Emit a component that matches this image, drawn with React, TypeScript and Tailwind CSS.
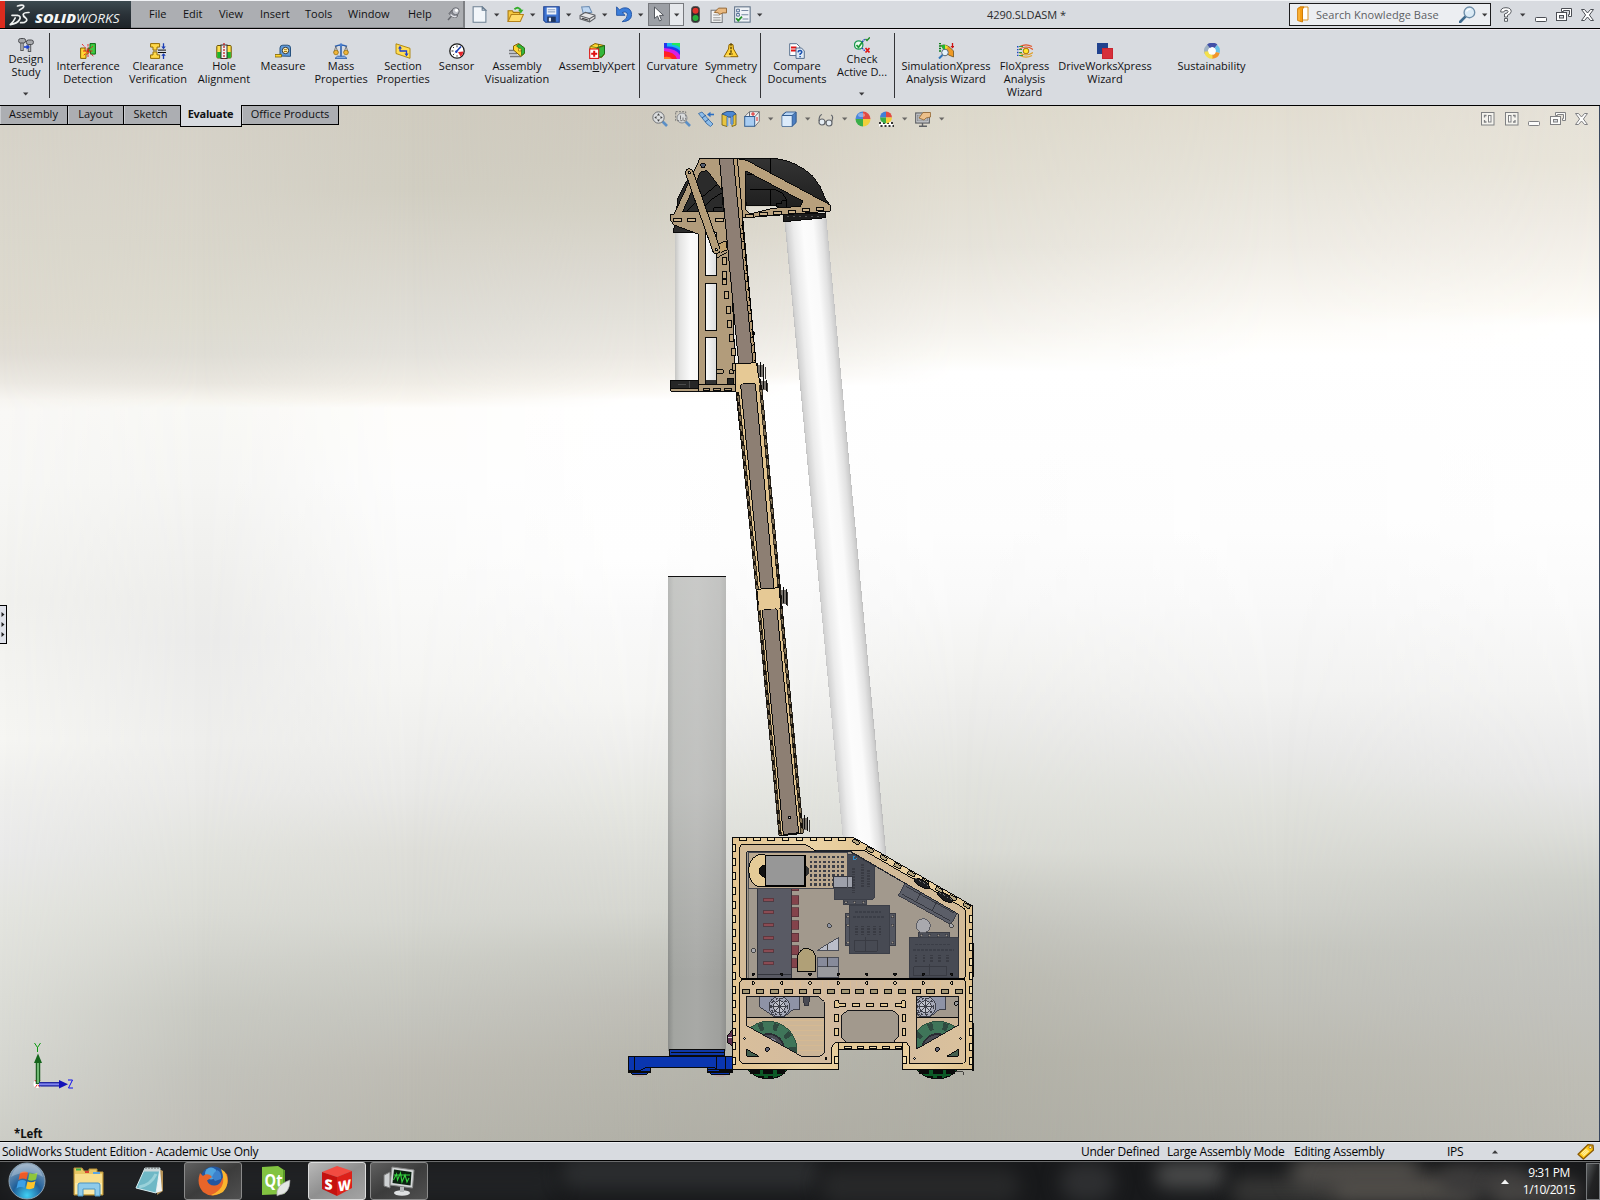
import React from "react";

type Kids = { children?: React.ReactNode };

/* ---------- small shared pieces ---------- */

function Ico({ children, s = 16 }: Kids & { s?: number }) {
  return (
    <svg width={s} height={s} viewBox="0 0 16 16" className="block shrink-0">
      {children}
    </svg>
  );
}

function Caret({ up = false }: { up?: boolean }) {
  return (
    <svg width="6" height="4" viewBox="0 0 6 4" className="block shrink-0">
      <path d={up ? "M0 3.5h6L3 .3z" : "M0 .5h5.4L2.7 3.4z"} fill="#3a3a3c" />
    </svg>
  );
}

/* ---------- title bar ---------- */

function Logo() {
  return (
    <div className="flex h-full w-[131px] bg-gradient-to-b from-[#3c4a50] via-[#2a3238] to-[#1e2328]">
      <div className="h-full w-[5px] bg-[#dc2b1e]" />
      <svg width="126" height="28" viewBox="5 0 126 28">
        <g fill="none" stroke="#eef0f0" strokeWidth="1.7" strokeLinecap="round" strokeLinejoin="round">
          <path d="M17.500 5q6-1.800 6.300.2 0 1.500-4.300 3.800" />
          <path d="M12 14.300h5.500q4 .6 2 4.500-2.300 3.800-9.300 4.900 3-2.400 5-6.700" />
          <path d="M29 11.500q-5.200-.2-5.800 2-.2 1.500 2.200 3.200 3.200 2.700-.8 4.600-1.800.4-4 .4" />
        </g>
        <text x="35" y="22.300" fontFamily="Open Sans, sans-serif" fontSize="12.500" fontWeight="800" fontStyle="italic" fill="#f4f5f5" textLength="41" lengthAdjust="spacingAndGlyphs">SOLID</text>
        <text x="76" y="22.300" fontFamily="Open Sans, sans-serif" fontSize="12.500" fontStyle="italic" fill="#f0f1f1" textLength="43.500" lengthAdjust="spacingAndGlyphs">WORKS</text>
      </svg>
    </div>
  );
}

const menus: [string, string][] = [
  ["File", "w-[34px]"], ["Edit", "w-9"], ["View", "w-[41px]"], ["Insert", "w-[45px]"],
  ["Tools", "w-[43px]"], ["Window", "w-[60px]"], ["Help", "w-[39px]"],
];

function Quick({ children, caret = false }: Kids & { caret?: boolean }) {
  return (
    <div className="flex items-center">
      <div className="flex w-6 justify-center">{children}</div>
      {caret && <div className="flex w-3 justify-center"><Caret /></div>}
    </div>
  );
}

function WinButtons({ dim = false }: { dim?: boolean }) {
  const c = dim ? "#75767a" : "#4b4e54";
  return (
    <>
      <svg width="12" height="14" viewBox="0 0 12 14" className="block shrink-0">
        <rect x=".5" y="9.500" width="11" height="4" rx=".8" fill="#fff" stroke={c} />
      </svg>
      <svg width="16" height="14" viewBox="0 0 16 14" className="block shrink-0">
        <path d="M5.500.5h10v8h-3v-2h1v-4h-6v1h-2z" fill="#fff" stroke={c} />
        <rect x=".5" y="4.500" width="10" height="8" fill="#fff" stroke={c} />
        <rect x="3.500" y="7.500" width="4" height="2.500" fill="#d8dbe0" stroke={c} />
      </svg>
      <svg width="13" height="12" viewBox="0 0 13 12" className="block shrink-0">
        <path d="M.5 .5h3L6.500 4 9.500.5h3L8.400 6l4.100 5.500h-3L6.500 8l-3 3.500h-3L4.600 6z" fill="#fff" stroke={c} />
      </svg>
    </>
  );
}

function TitleBar() {
  return (
    <div className="flex h-[29px] border-t border-b border-t-[#f1f3f6] border-b-black bg-[#d8dbe0]">
      <Logo />
      <div className="flex h-full w-[334px] items-center border-r-2 border-b border-r-[#7e8084] border-b-[#8e9094] bg-[#acaeb2] pl-[18px] text-[11px] text-[#111113]">
        {menus.map(([m, w]) => <div key={m} className={w}>{m}</div>)}
        <svg width="13" height="14" viewBox="0 0 13 14" className="block shrink-0">
          <path d="M1 13l4-4.500" stroke="#66686e" strokeWidth="1.500" />
          <path d="M2 6.500Q6 12 10 10l1-4L6 2z" fill="#85878f" stroke="#54565c" strokeWidth=".8" />
          <path d="M3.500 7.500q3 3 6 1.800" stroke="#e3e4ea" fill="none" strokeWidth="1.500" />
          <circle cx="8.700" cy="4.200" r="3.500" fill="#c3c5cc" stroke="#64666d" strokeWidth=".9" />
          <circle cx="9.500" cy="3.300" r="1.600" fill="#fff" />
        </svg>
      </div>
      <div className="flex h-full items-center pl-[2px]">
        <Quick caret><Ico s={17}>
          <path d="M2 .7h8.500L14 4v11.300H2z" fill="#f2f6fa" stroke="#6d8093" /><path d="M10.500.7V4H14z" fill="#c5d2df" stroke="#6d8093" />
        </Ico></Quick>
        <Quick caret><Ico s={17}>
          <path d="M1 14V4.500h4l1 1.500h6v3z" fill="#f5c842" stroke="#a8780f" /><path d="M1 14.500L4 8h11.500l-3 6.500z" fill="#ffdc6c" stroke="#b5821a" />
          <path d="M7 3q4-3 6 1" stroke="#35ae2c" strokeWidth="1.800" fill="none" /><path d="M10.500 3.500h5L13 7z" fill="#35ae2c" />
        </Ico></Quick>
        <Quick caret><Ico s={17}>
          <path d="M.7.7h14.600v14.600H2.500L.7 13.500z" fill="#3f74d2" stroke="#1b3f8f" /><rect x="3.500" y="1.500" width="9" height="6.500" fill="#eef3fb" /><path d="M4.500 3.500h7M4.500 5.500h7" stroke="#8fa3c4" /><rect x="4" y="10" width="8" height="5" fill="#20355f" /><rect x="5.500" y="11" width="2" height="3.500" fill="#e6ecf6" />
        </Ico></Quick>
        <Quick caret><Ico s={17}>
          <path d="M4 7L2.500 1l7-.5L12 6z" fill="#bed7f2" stroke="#6f8fb4" /><path d="M1 9l5-3 9 2.500v3L10 15l-9-3z" fill="#e5e5e6" stroke="#5b5d62" /><path d="M1.500 9.500l8.500 2.500 5-3M10 12v3" fill="none" stroke="#5b5d62" /><path d="M3 11.500l6 2" stroke="#333" />
        </Ico></Quick>
        <Quick caret><Ico s={17}>
          <path d="M1.500.8v8h8L6.800 6.200q4.500-1.700 4.900 1.800.2 4-5 6.800 8.700-.3 9-6.800Q15 .8 8 1.800 6 2.200 4.300 3.700z" fill="#3b7edb" stroke="#1d4f9f" strokeWidth=".8" />
        </Ico></Quick>
        <div className="ml-px flex h-[23px] border border-[#77797e]">
          <div className="flex w-[21px] items-center justify-center border-r border-[#77797e] bg-[#9c9fa5]">
            <svg width="12" height="17" viewBox="0 0 12 17"><path d="M1.500 1v11.500L4.500 10l2 5 2-.9-2-4.700h4z" fill="#fff" stroke="#555960" /></svg>
          </div>
          <div className="flex w-[13px] items-center justify-center bg-[#e6e8ec]"><Caret /></div>
        </div>
        <div className="flex w-[22px] justify-center">
          <svg width="9" height="17" viewBox="0 0 9 17"><rect x=".5" y=".5" width="8" height="16" rx="3" fill="#2c2c2c" stroke="#555" /><circle cx="4.500" cy="4.700" r="3" fill="#e0342c" /><circle cx="4.500" cy="12" r="3" fill="#27ae3c" /></svg>
        </div>
        <Quick><Ico s={17}>
          <rect x="1" y="4" width="10.500" height="11.500" fill="#f5f5f5" stroke="#77797e" /><path d="M3 8.500h6M3 11h7M3 13.300h7" stroke="#999" />
          <path d="M4 6l4-4h7.500v4.500H12L9 8l-1-1.500z" fill="#e9b980" stroke="#8a5a22" strokeWidth=".8" />
        </Ico></Quick>
        <Quick caret><Ico s={17}>
          <rect x=".6" y=".8" width="14.600" height="14.400" fill="#eff2f6" stroke="#5f7187" /><path d="M2.500 3h2.500v2.500H2.500zM2.500 7h2.500v2.500H2.500z" fill="#fff" stroke="#33507e" strokeWidth=".8" /><path d="M7 4.200h6.500M7 8.200h6.500M8 12.200h5.500" stroke="#7688a0" /><path d="M2 11.500l2 2.300L7.500 10" stroke="#25922b" fill="none" strokeWidth="1.700" />
        </Ico></Quick>
      </div>
      <div className="ml-auto flex h-full items-center">
        <div className="mr-[223px] pt-px text-[11px] tracking-[-0.05px] whitespace-pre text-[#2b2b2d]">4290.SLDASM *</div>
        <div className="flex h-[23px] w-[202px] items-center border border-[#1c1c1e] bg-[#eceef2] pl-[7px]">
          <svg width="12" height="17" viewBox="0 0 12 17"><path d="M3 1h8v13H5z" fill="#fff" stroke="#d9952a" /><path d="M.7 2.500L3 1h4L5.500 3v13L.7 14.500z" fill="#f79d12" stroke="#d07d08" /><path d="M2 3.500v11" stroke="#ffc65c" /></svg>
          <div className="ml-[7px] w-[143px] pt-px text-[11px] tracking-[0.05px] text-[#5d5f64]">Search Knowledge Base</div>
          <Ico s={17}><path d="M1 15l5-5" stroke="#3f6a8d" strokeWidth="2.600" strokeLinecap="round" /><circle cx="9.800" cy="6" r="5" fill="#dcebf6" stroke="#6e8ea9" strokeWidth="1.300" /><path d="M7 5q1.500-2.500 4-2" stroke="#fff" fill="none" strokeWidth="1.300" /></Ico>
          <div className="ml-[6px]"><Caret /></div>
        </div>
        <svg width="12" height="15" viewBox="0 0 12 15" className="ml-[9px]"><path d="M.7 5Q.5.700 6 .7q5.200.2 5.200 3.800Q11 7 7.500 8.300V10h-3V7q3.700-1 3.600-2.500Q8 3.300 6 3.300 4 3.500 3.700 5zM4.500 11.500h3v2.800h-3z" fill="#fff" stroke="#4b4e54" strokeWidth=".9" /></svg>
        <div className="mr-[9px] ml-2"><Caret /></div>
        <div className="mr-[6px] flex items-center gap-[9px]"><WinButtons /></div>
      </div>
    </div>
  );
}

/* ---------- ribbon ---------- */

const G: Record<string, React.ReactNode> = {
  design: <><path d="M4 4v10M11.500 5v10" stroke="#55575b" strokeWidth="3.400" /><path d="M4 5v8M11.500 6v8" stroke="#b9bbc0" strokeWidth="1.500" /><rect x=".6" y="1.500" width="7" height="4.500" rx="2" fill="#a8aaae" stroke="#494b4f" /><rect x="8.400" y="3" width="7" height="4.500" rx="2" fill="#a8aaae" stroke="#494b4f" /><path d="M6 10h4" stroke="#1b3fd0" strokeWidth="1.600" /><path d="M8.500 7.500L12 10l-3.500 2.500z" fill="#1b3fd0" /></>,
  interference: <><path d="M.6 5h4.500v3h3v3H6v4.400H.6z" fill="#ffd633" stroke="#8a6400" /><path d="M15.400.6H10v4.500H8v3h2.500v3H15.400z" fill="#3ecc42" stroke="#0c6b12" /><path d="M2 1l12 13M13 3L3 13M8 1v14M3 8h10" stroke="#ee1c1c" strokeWidth=".9" strokeDasharray="2.500 1" /></>,
  clearance: <><path d="M.6.6h9v3.500H7v3H3v-3H.6zM.6 15.400h9v-3.500H7v-3H3v3H.6z" fill="#ffd94a" stroke="#946c00" /><path d="M8 7.100h8M8 9.500h8" stroke="#111" /><path d="M13.500.3v5M13.500 16v-5" stroke="#1c3fb5" strokeWidth="1.300" /><path d="M11.300 3.500h4.500L13.500 6.300zM11.300 12.800h4.500l-2.300-2.500z" fill="#1c3fb5" /></>,
  hole: <><rect x=".8" y="2.500" width="14.400" height="12.500" rx="1" fill="#ffdf4d" stroke="#6b5200" /><rect x="1.200" y="9" width="13.600" height="6" fill="#1eb52c" /><rect x="5" y="2" width="6" height="13.500" fill="#efefef" stroke="#333" /><path d="M8 0v16" stroke="#c01010" strokeDasharray="2 1" strokeWidth="1.200" /></>,
  measure: <><path d="M5 13V5q0-2.800 2.800-2.800h5Q15.500 2.200 15.500 5v8.300z" fill="#5f9bdc" stroke="#27527f" /><circle cx="10.500" cy="7.500" r="3.200" fill="#fff4c2" stroke="#333" /><path d="M9 6.700h3M9 8.500h3" stroke="#b07d00" /><path d="M0 11.500h6.500v2.500H0z" fill="#ffd633" stroke="#7d6100" strokeWidth=".8" /></>,
  mass: <><path d="M8 1v13M2 3.500q6-3 12 0" stroke="#2b5fae" strokeWidth="1.600" fill="none" /><path d="M2.800 3.500L.8 9.500M2.800 3.500l2.400 6M13.200 3.500l-2.400 6M13.200 3.500l2 6" stroke="#666" strokeWidth=".8" /><circle cx="3" cy="9.500" r="2.300" fill="#f0b53c" stroke="#946c00" strokeWidth=".7" /><circle cx="13" cy="9.500" r="2.300" fill="#f0b53c" stroke="#946c00" strokeWidth=".7" /><path d="M2 15.400l2.500-2.200h7l2.500 2.200z" fill="#8fb5e6" stroke="#2b5fae" strokeWidth=".9" /><circle cx="8" cy="1.800" r="1.500" fill="#4a7fd0" /></>,
  section: <><path d="M1 .8l14 4.500v10L1 10.500z" fill="#ffdd55" stroke="#ad8100" strokeWidth=".9" /><path d="M5 8.500v-4M5 8h6.500v3.500" stroke="#1c3fd0" strokeWidth="1.300" fill="none" /><path d="M3 5.500h4L5 2.800zM9.500 10.500h4l-2 3z" fill="#1c3fd0" /></>,
  sensor: <><circle cx="8" cy="8" r="7.200" fill="#fff" stroke="#1b1b1b" strokeWidth="1.300" /><path d="M9 9l5.500-.5Q14 12 11.500 13.500z" fill="#e4242a" /><path d="M7 9l5-5.500" stroke="#1c3fb5" strokeWidth="1.600" /><circle cx="7.300" cy="8.700" r="1.200" fill="#1c3fb5" /><path d="M2.500 8h2M8 2.300v2M4 4l1 1M4 12l1.200-1M8 13.700v-1.500" stroke="#333" /></>,
  visual: <><path d="M0 7.500h6M0 10.500h8M1 13.500h11" stroke="#77797d" strokeWidth="1.600" /><path d="M4.500 3L9.500.5 15.500 5v5.500L12 13.500 4.500 7z" fill="#ffd633" stroke="#846200" /><path d="M10 1l5.500 4v5l-3 2.500V7L7.500 3z" fill="#34b63b" stroke="#176b1c" strokeWidth=".7" /><path d="M9.500 5.500h2.500v2.500H9.500z" fill="#fff06a" stroke="#846200" strokeWidth=".6" /></>,
  xpert: <><path d="M1 3.500L6 .6l9.500 2v8.500l-3 3.500L1 11z" fill="#ffd633" stroke="#846200" /><path d="M8 4.500l7.500-2v8l-3 3.500H8z" fill="#34b63b" stroke="#176b1c" /><path d="M2 3.500l7 1.500L14.500 3M9.500 1v5" stroke="#4d6b10" fill="none" strokeWidth=".7" /><rect x=".7" y="6" width="9" height="9.400" fill="#fff" stroke="#d11" strokeWidth="1.100" /><path d="M5.200 7.800v6M2.200 10.800h6" stroke="#e01010" strokeWidth="2" /></>,
  curvature: <><rect width="16" height="16" fill="#ff1f24" /><path d="M0 0h16v16h-3Q11 9 0 8z" fill="#d81fe0" /><path d="M0 0h16v12q-3-6-16-7z" fill="#2335ee" /><path d="M3 0h13v8Q12 3 3 3.500z" fill="#14b8f0" /><path d="M8 0h8v4.500Q13 1.800 8 1.800z" fill="#24e85c" /><path d="M0 14q6-1 8 2H0z" fill="#ff8020" /></>,
  symmetry: <><path d="M8 1.200l-2 .5L5.500 6 1 13.700h14L10.500 6 10 1.700z" fill="#ffd23a" stroke="#8e6300" strokeLinejoin="round" /><path d="M8 .3v11M6 11h4" stroke="#4d3a00" strokeDasharray="2.500 1" strokeWidth="1.300" /><path d="M2.500 13h5" stroke="#fff3b0" /></>,
  compare: <><path d="M.7.7h7l3 3v8.800h-10z" fill="#fff" stroke="#58708e" /><path d="M2 4.500h5.500M2 7.500h5.500" stroke="#e01616" strokeWidth="2" /><path d="M7 5h5.500L15.300 8v7.400H7z" fill="#dfeaf7" stroke="#58708e" /><path d="M9 9.300Q9.200 7.500 11 7.500q2 .2 1.800 1.800Q12.400 10.500 11.100 11v1M11.100 13v1.300" stroke="#1b52ae" strokeWidth="1.500" fill="none" /></>,
  check: <><circle cx="4.700" cy="8" r="4.200" fill="#eefaf0" stroke="#1b9a53" strokeWidth="1.300" /><path d="M2.500 8l2 2.300L9 4" stroke="#1b9a36" strokeWidth="1.700" fill="none" /><path d="M8 5l3-3M8 11l3 3" stroke="#223cc9" strokeWidth="1.300" strokeDasharray="1.500 .8" /><path d="M11.500 2l1.500 1.500L15.800.4" stroke="#1b8a26" strokeWidth="1.400" fill="none" /><path d="M11.500 11l4 4.500M15.500 11l-4 4.500" stroke="#e01616" strokeWidth="1.700" /></>,
  simx: <><path d="M1 .5h2M1 3h2M1 5.500h2M1 8h2" stroke="#0d7d1a" strokeWidth="1.600" /><path d="M3 2.500Q9 0 15.500 8V14L10.500 12z" fill="#f09a24" stroke="#4a3200" strokeWidth=".6" /><path d="M3 2.500Q6 .8 8.500 2.500L6 8z" fill="#23b634" /><path d="M7 2l3 1.500-3 5z" fill="#e6e034" /><circle cx="7" cy="9.500" r="3.300" fill="#e4f2fb" stroke="#5a6a76" /><path d="M4.500 12L1 15.500" stroke="#2f73b7" strokeWidth="2" /><path d="M14.500 0v4" stroke="#c11" strokeWidth="1.300" /><path d="M12.500 3h4l-2 2.500z" fill="#c11" /></>,
  flox: <><path d="M3 3.500Q9 .2 15 3.500M2 6.500Q9 1.500 16 6.500" fill="none" stroke="#e0562c" strokeWidth="1.200" /><path d="M3 12.500q6 3.300 12 0M2 9.500q7 5 14 0" fill="none" stroke="#e0a02c" strokeWidth="1.200" /><path d="M2 3.500h4M2 6.500h3M2 9.500h3M2 12.500h4" stroke="#2da044" strokeWidth="1.200" /><path d="M.7 3v11" stroke="#2148c4" strokeWidth="1.600" strokeDasharray="1.400 1.500" /><circle cx="9" cy="8" r="2.800" fill="#ffe62e" stroke="#a8700c" /></>,
  drive: <><rect width="11" height="11" fill="#21428e" /><rect x="3" y="5" width="11" height="11" transform="translate(2 0)" fill="#c9252f" /><rect x="4" y="6" width="9" height="9" transform="translate(2 0)" fill="#d62f3a" /></>,
  sustain: <><circle cx="8" cy="8" r="4" fill="#fdfefe" /><path d="M2.200 10A6 6 0 016 2.400" stroke="#9fb2c4" strokeWidth="4" fill="none" /><path d="M4.500 3.200a6 6 0 017.500 0" stroke="#4150a8" strokeWidth="4.400" fill="none" /><path d="M12 3.500A6 6 0 0113.700 9.500" stroke="#69c2e8" strokeWidth="4" fill="none" /><path d="M13.800 9.500a6 6 0 01-5.800 4.300" stroke="#f0962c" strokeWidth="4" fill="none" /><path d="M8.500 13.800A6 6 0 012.200 8.500" stroke="#f4e04c" strokeWidth="4" fill="none" /></>,
};

type Cmd = { k: string; t: React.ReactNode[]; w: string; high?: boolean };
const SEP = "sep";
const ribbon: (Cmd | string)[] = [
  { k: "design", t: ["Design", "Study"], w: "w-[46px] ml-[3px]", high: true }, SEP,
  { k: "interference", t: ["Interference", "Detection"], w: "w-[72px] ml-[2px]" },
  { k: "clearance", t: ["Clearance", "Verification"], w: "w-[68px]" },
  { k: "hole", t: ["Hole", "Alignment"], w: "w-16" },
  { k: "measure", t: ["Measure"], w: "w-[54px]" },
  { k: "mass", t: ["Mass", "Properties"], w: "w-[62px]" },
  { k: "section", t: ["Section", "Properties"], w: "w-[62px]" },
  { k: "sensor", t: ["Sensor"], w: "w-[45px]" },
  { k: "visual", t: ["Assembly", "Visualization"], w: "w-[76px]" },
  { k: "xpert", t: [<>Assem<span className="underline">b</span>lyXpert</>], w: "w-[84px]" }, SEP,
  { k: "curvature", t: ["Curvature"], w: "w-[60px] ml-[2px]" },
  { k: "symmetry", t: ["Symmetry", "Check"], w: "w-[58px]" }, SEP,
  { k: "compare", t: ["Compare", "Documents"], w: "w-[66px] ml-[3px]" },
  { k: "check", t: ["Check", "Active D..."], w: "w-16", high: true }, SEP,
  { k: "simx", t: ["SimulationXpress", "Analysis Wizard"], w: "w-[98px] ml-[2px]" },
  { k: "flox", t: ["FloXpress", "Analysis", "Wizard"], w: "w-[59px]" },
  { k: "drive", t: ["DriveWorksXpress", "Wizard"], w: "w-[102px]" },
  { k: "sustain", t: ["Sustainability"], w: "w-[99px] ml-[6px]" },
];

function Ribbon() {
  return (
    <div className="flex h-[77px] border-t border-b border-t-[#f0e8f0] border-b-black bg-[#d8dbe0] text-[11px] leading-[13px] text-[#111113]">
      {ribbon.map((r, i) =>
        typeof r === "string" ? (
          <div key={i} className="mt-[3px] h-[65px] w-px bg-[#333437]" />
        ) : (
          <div key={i} className={`flex shrink-0 flex-col items-center text-center ${r.w} ${r.high ? "pt-[7px]" : "pt-[13px]"}`}>
            <Ico>{G[r.k]}</Ico>
            <div className={`whitespace-nowrap ${r.high ? "-mt-px" : ""}`}>
              {r.t.map((l, j) => <div key={j}>{l}</div>)}
            </div>
            {r.high && <div className="mt-[14px]"><Caret /></div>}
          </div>
        )
      )}
    </div>
  );
}

/* ---------- viewport background ---------- */

const cols: { x: number; c: string }[] = [
  { x: 0, c: "106 d6d2c8,247 dbd8cd,318 dedacf,354 e1ddd5,383 ece9e3,400 f7f5f1,411 f9f8f6,480 f7f7f5,600 f1f1ee,740 f6f6f3,791 efefed,850 eaeaea,910 e4e5e0,995 dcddd7,1080 d4d5cf,1141 cccdc6" },
  { x: 200, c: "106 d5d1c7,247 d9d6cb,318 dddbd0,354 dfddd5,383 e9e6df,400 f6f4ee,408 f8f8f5,480 f5f5f3,600 ededeb,640 ebebea,740 eeeeec,790 eaeae8,850 e2e3de,910 dbdcd6,950 d4d5cf,1010 c9cac3,1070 c3c3bc,1141 c0beb7" },
  { x: 410, c: "106 d0ccc0,190 d1cec2,247 d8d5cb,318 dfddd6,354 e4e2dc,383 efece5,400 f9f6f0,408 fefdfb,480 fdfdfd,600 f9f9f8,680 f5f5f3,740 efefed,790 e9e9e7,850 deded9,920 d6d7d1,960 cdcec7,1020 c4c4bd,1070 bebcb4,1141 b7b6ad" },
  { x: 640, c: "106 cfcabe,160 d0ccc0,210 d4d1c5,270 dcd9d1,318 e3e1da,354 ebe8e2,375 f3f0ea,392 fbf9f5,400 ffffff,560 fefefe,620 f9f9f9,700 f5f5f3,750 eeeeec,800 e6e7e2,860 dcddd8,910 d5d6d0,950 c9cac3,1000 c0bfb8,1060 b8b7ae,1141 b1b0a7" },
  { x: 800, c: "106 d5d1c4,170 d9d4c8,228 ddd9ce,280 e5e2da,324 ece9e3,355 f3f1ec,374 f9f7f3,386 ffffff,545 fdfdfd,610 f9f9f9,680 f4f4f2,735 ededeb,790 e4e5e0,855 dbdcd7,900 d1d2cb,940 c5c6bf,990 bdbcb4,1060 b5b4ab,1141 b0aea5" },
  { x: 960, c: "106 dcd8cb,180 e1ddd1,247 e6e3da,290 eeebe4,330 f5f3ee,355 fbfaf6,372 ffffff,530 fdfdfd,600 f9f9f9,660 f3f3f1,720 ebebe9,780 e2e3de,850 dadbd5,890 cccdc6,930 c2c2bb,980 bab9b0,1060 b2b1a7,1141 aeada4" },
  { x: 1280, c: "106 e2ddd1,170 e6e3d9,247 efece5,300 f8f6f1,335 fefdfa,355 ffffff,530 fdfdfd,600 f9f9f9,690 f2f2f1,750 e9e9e8,800 e1e2dd,860 d8d9d3,910 cfd0ca,950 c6c7c0,1000 c1c1ba,1060 bab9b0,1141 b4b3aa" },
  { x: 1600, c: "106 e5e1d8,160 e8e4d9,220 efebe4,270 f6f3ed,310 fdfbf6,325 ffffff,520 fefefe,600 fafafa,690 f3f3f2,780 e8e8e8,830 dddeda,880 ced0ca,930 c6c7c2,1000 c2c2bd,1080 bebdb5,1141 bbbab2" },
];

function Backdrop() {
  return (
    <div className="absolute inset-0">
      {cols.map((col, i) => {
        const stops = col.c.split(",").map((s) => {
          const [y, h] = s.split(" ");
          return `#${h} ${+y - 106}px`;
        });
        const mask = i ? `linear-gradient(to right, transparent ${cols[i - 1].x}px, black ${col.x}px)` : undefined;
        return <div key={i} className="absolute inset-0" style={{ background: `linear-gradient(to bottom, ${stops.join(",")})`, maskImage: mask }} />;
      })}
    </div>
  );
}

/* ---------- CAD model ---------- */

const K = "#0a0a0a";
const rng = (n: number) => Array.from({ length: n }, (_, i) => i);

function Bolt({ x, y, h }: { x: number; y: number; h: number }) {
  return (
    <g>
      <rect x={x} y={y} width="20" height={h} fill="#77726c" stroke="none" />
      <path d={`M${x + 2} ${y - 4}v${h + 4}M${x + 11} ${y - 8}v${h + 6}M${x + 20} ${y - 2}v${h + 6}`} stroke={K} strokeWidth="3" />
      <path d={`M${x + 24} ${y + 6}v${h}`} stroke="#3d3a37" strokeWidth="3" />
    </g>
  );
}

function Head() {
  return (
    <g transform="translate(650 145) scale(.33333)" stroke={K} strokeWidth="3">
      <rect x="76" y="262" width="130" height="448" fill="url(#tubeL)" stroke="none" />
      <path d="M70 262L76 225 84 160Q100 120 125 85L150 70H215L222 262Z" fill="#2b2b2b" />
      <path d="M108 200Q150 160 215 108M150 200Q180 160 215 145M192 200V188H215" fill="none" stroke="#000" />
      <path d="M265 40H375Q440 48 490 95Q515 125 525 160L541 182 440 205 380 183H290Z" fill="url(#dark)" />
      <path d="M361 40V90M290 90Q400 80 460 150M300 133H372Q400 140 410 165M361 133V182M380 185V175H395V168H410V185" fill="none" stroke="#000" />
      <path d="M296 185H376V192L330 204H296Z" fill="#e2dfd6" stroke="none" />
      <path d="M400 208L527 204V218L402 230Z" fill="#1c1c1c" />
      <path d="M410 214H520" stroke="#555" strokeDasharray="8 10" />
      {/* rear plates */}
      <path d="M150 40H215V135L172 77 152 80 98 200H228L240 262 258 740H146V268L72 240 62 225V208H72Z" fill="#b29c7b" />
      {[[166, 262, 130], [166, 415, 141], [166, 577, 141]].map(([x, y, h]) => (
        <rect key={y} x={x} y={y} width="34" height={h} fill="url(#tubeW)" />
      ))}
      <rect x="167" y="705" width="32" height="13" fill="#333" stroke="none" />
      <path d="M62 706H146V730H62Z" fill="#262626" />
      <path d="M62 730H146V739H62Z" fill="#b29c7b" />
      <path d="M84 720h24M118 708v22" stroke="#4a4a4a" />
      <path d="M148 720H256M200 674h20v11h-20M240 674h10v12h-10z" fill="none" />
      <path d="M232 700h18v18h-18z" fill="#222" />
      {rng(3).map((i) => <rect key={i} x={160 + i * 32} y="730" width="20" height="8" fill="none" />)}
      {[[70, 220], [114, 220], [198, 220]].map(([x, y]) => <rect key={x} x={x} y={y} width="24" height="10" fill="#c9b08a" />)}
      {[338, 380, 405, 440, 484, 526, 570, 612, 655].map((y, i) => (
        <rect key={y} x={219 + (i > 2 ? (i - 2) * 5 : 0)} y={y} width="12" height={y === 405 ? 14 : 21} fill="#c2a981" />
      ))}
      <circle cx="159" cy="61" r="7" fill="#555f70" />
      {/* right truss */}
      <path d="M255 40L290 46 541 180V198L290 218 268 220Z M288 78V195L300 207 368 190 452 184 458 168Z" fill="#b8a07c" fillRule="evenodd" />
      {[[288, 208], [330, 204], [372, 199], [415, 196], [458, 192], [500, 188]].map(([x, y]) => (
        <rect key={x} x={x} y={y} width="22" height="9" fill="#c9b08a" />
      ))}
      {[55, 97, 142, 184].map((y, i) => <rect key={y} x={253 + i * 4} y={y} width="10" height="22" fill="#c9b08a" />)}
      {/* upper arm */}
      <path d="M250 40H262L318 655H308Z" fill="#b89d76" />
      <path d="M276 225L318 650" stroke="#000" strokeWidth="3" />
      <path d="M276 240L315 650" stroke="#000" strokeWidth="8" strokeDasharray="3 21" />
      <path d="M208 40H250L309 655H266Z" fill="#8e7f74" />
      <path d="M118 83L199 314" stroke={K} strokeWidth="26" strokeLinecap="round" />
      <path d="M118 83L199 314" stroke="#b69e79" strokeWidth="20" strokeLinecap="round" />
      <circle cx="118" cy="83" r="4" fill="#ddd" /><circle cx="199" cy="314" r="4" fill="#ddd" />
      <path d="M208 296L228 288 232 315 212 322M202 338L232 322" fill="#c0a16c" />
      <path d="M306 560l10 4-6 8z" fill="#000" />
    </g>
  );
}

function Arm() {
  return (
    <g transform="translate(700 360) scale(.33333)" stroke={K} strokeWidth="3">
      <Bolt x={172} y={14} h={38} /><Bolt x={180} y={62} h={28} />
      <Bolt x={240} y={690} h={42} /><Bolt x={304} y={1374} h={36} />
      <path d="M107 12L168 8 180 70 241 685 309 1420 238 1428 170 690 108 95Z" fill="#e2c48f" />
      <path d="M112 95L171 688 240 1426" fill="none" stroke="#8b7a5d" strokeWidth="7" />
      <path d="M182 75L238 684 307 1418" fill="none" stroke="#8b7a5d" strokeWidth="7" />
      <path d="M112 95L171 688 240 1426" fill="none" stroke="#15110c" strokeWidth="7" strokeDasharray="14 16" />
      <path d="M182 75L238 684 307 1418" fill="none" stroke="#15110c" strokeWidth="7" strokeDasharray="14 16" />
      <path d="M109 95L168 688 237 1426M116 95L175 688 244 1426M178 75L234 684 303 1418M185 75L241 684 310 1418" fill="none" stroke="#15110c" strokeWidth="2.500" />
      <path d="M122 76L128 71 160 69 166 72 222 685 182 685Z" fill="#8d7f73" />
      <path d="M187 754L191 749 225 746 231 750 296 1418 250 1424Z" fill="#8d7f73" />
      <path d="M108 12L168 8 176 66 114 72Z" fill="#e6c995" stroke="none" />
      <path d="M172 688L237 683 241 744 178 750Z" fill="#e6c995" stroke="none" />
      <path d="M107 70V12L168 8M170 688L238 683M170 688L174 750M238 683L242 744M240 1427L308 1420" fill="none" />
      <rect x="265" y="1369" width="6" height="6" fill="#ccc" />
    </g>
  );
}

function Screws({ y, fill = "#d9c3a0" }: { y: number; fill?: string }) {
  return <>{[400, 485, 570, 655, 740, 825, 910, 995].map((x) => <circle key={x} cx={x} cy={y} r="4" fill={fill} />)}</>;
}

function Speed({ x, y, w, h }: { x: number; y: number; w: number; h: number }) {
  return (
    <g>
      <rect x={x} y={y} width={w} height={h} fill="#474a53" stroke="#3c3f48" />
      {rng(5).map((i) => <path key={i} d={`M${x + 20 + (i * (w - 30)) / 5} ${y + h * 0.42}v${h * 0.2}`} stroke="#393b43" strokeWidth="8" strokeDasharray="5 3" />)}
      <path d={`M${x + 16} ${y + 20}h${w - 40}M${x + 10} ${y + 36}h${w - 24}`} stroke="#3b3e47" strokeWidth="5" strokeDasharray="9 3" />
      <path d={`M${x + 14} ${y + h * 0.72}h${w - 50}v${h * 0.22}h-${w - 50}zM${x + w * 0.4} ${y + h * 0.66}v${h * 0.3}`} fill="none" stroke="#393b43" />
    </g>
  );
}

function Wheel({ cx, cy }: { cx: number; cy: number }) {
  return (
    <g>
      <circle cx={cx} cy={cy} r="86" fill="#3f7559" stroke="#2c4f3d" />
      <circle cx={cx} cy={cy} r="72" fill="none" stroke="#2f4a40" strokeWidth="22" strokeDasharray="14 30" />
      <circle cx={cx} cy={cy} r="48" fill="#4a4b54" stroke="#2a2b33" strokeWidth="5" />
      <circle cx={cx} cy={cy} r="34" fill="none" stroke="#85889a" strokeWidth="6" strokeDasharray="14 10" />
    </g>
  );
}

function Gearbox({ x, y }: { x: number; y: number }) {
  return (
    <g stroke="#3d3f49">
      <path d={`M${x - 60} ${y - 30}H${x + 60}V${y + 10}H${x + 40}L${x + 10} ${y + 34}H${x - 10}L${x - 60} ${y}Z`} fill="#8e93a6" />
      <circle cx={x} cy={y} r="31" fill="#a6a9b8" />
      <circle cx={x} cy={y} r="18" fill="#c0c2cc" />
      <circle cx={x} cy={y} r="25" fill="none" strokeWidth="4" strokeDasharray="7 8" />
      <path d={`M${x - 26} ${y}H${x + 26}M${x} ${y - 26}V${y + 26}M${x - 19} ${y - 19}L${x + 19} ${y + 19}M${x - 19} ${y + 19}L${x + 19} ${y - 19}`} />
    </g>
  );
}

function Base() {
  return (
    <g transform="translate(620 820) scale(.33333)" stroke={K} strokeWidth="3">
      {/* stand foot */}
      <path d="M40 765q18 14 36 0M280 765q18 14 40 0" fill="#b7a7a4" stroke="none" />
      <path d="M148 688H315V708H148Z" fill="#0e38a8" /><path d="M152 697H311" />
      <path d="M25 710H338V752H330V764H275L262 752V742H92V752L80 764H38L25 752Z" fill="#0a36b0" />
      <path d="M44 710V750M290 710V750M316 710V750M25 752H60L80 742H92M262 742H280L300 752H338M262 750H338" fill="none" />
      <path d="M25 757H92M262 757H338" strokeWidth="7" />
      {/* wheels below the chassis */}
      <path d="M385 750H500Q485 775 445 776Q405 775 385 750Z" fill="#0d5a27" /><path d="M892 750H1010Q995 775 952 776Q912 775 892 750Z" fill="#0d5a27" />
      <path d="M390 757H495M898 757H1005" strokeWidth="12" strokeDasharray="30 10" /><path d="M415 770H475M922 770H982" strokeWidth="6" strokeDasharray="16 12" /><path d="M1005 755H1030V765" fill="none" strokeWidth="2" />
      <path d="M338 628L324 645V668L338 680Z" fill="#5c3050" /><path d="M325 652h12v14" stroke="#ddd" fill="none" />
      {/* chassis */}
      <path d="M338 52H700L1058 258V750H848V670H656V750H338Z" fill="url(#wood)" />
      <path d="M1059 370V470M1059 608V752" strokeWidth="5" />
      <path d="M366 73H556L588 93H735L1028 262Q1036 266 1036 274V470L1030 476H366L360 470V80Z" fill="#d3bb98" />
      <path d="M380 95H690L1016 283V475H380Z" fill="#a2998d" stroke="#20242c" />
      <g clipPath="url(#win)">
        <path d="M385 98V475" stroke="#6b6862" />
        <rect x="412" y="95" width="103" height="380" fill="#595a64" stroke="#33353d" />
        {[240, 278, 315, 354, 393, 430].map((y) => <rect key={y} x="430" y={y - 5} width="31" height="9" fill="#8b4b53" stroke="#4a2d34" strokeWidth="2" />)}
        {[200, 240, 277, 315, 353, 391, 430].map((y) => <rect key={y} x="516" y={y - 13} width="20" height="26" fill="#84434b" stroke="#4c2a31" strokeWidth="2" />)}
        <path d="M683 103H700L765 140V230L755 240H643V200H683Z" fill="#474a53" stroke="#3c3f48" />
        <path d="M727 132V200M745 150V200M700 145V220" stroke="#393b43" strokeWidth="8" strokeDasharray="5 3" />
        <rect x="385" y="99" width="298" height="107" fill="#bba990" stroke="#44464f" />
        {rng(7).map((r) => <path key={r} d={`M570 ${112 + r * 13.600}H674`} stroke="#3d3f47" strokeWidth={r % 2 ? 5 : 7} strokeDasharray="7 6.500" />)}
        <path d="M436 105H415Q386 115 386 152Q388 190 415 200H436Z" fill="#e5cb97" stroke={K} />
        <path d="M436 135Q418 138 418 152Q418 168 436 172Z" fill="#111" stroke={K} />
        <rect x="437" y="107" width="119" height="91" fill="#979797" stroke="#000" strokeWidth="5" />
        <path d="M558 138l10 8v14l-10 8z" fill="#333" stroke="none" />
        <rect x="640" y="170" width="57" height="34" fill="#9da0aa" stroke="#33353d" /><path d="M682 170v34" stroke="#4b4e57" strokeWidth="4" />
        <path d="M705 108a6 6 0 106 6" fill="none" stroke="#2f8fd0" />
        <rect x="670" y="238" width="70" height="16" fill="#4d5059" stroke="#3c3f48" />
        {[678, 704, 730].map((x) => <circle key={x} cx={x} cy="247" r="4" fill="#9a948b" stroke="#33353d" strokeWidth="2" />)}
        <rect x="676" y="281" width="150" height="95" fill="#545761" stroke="#393b43" />
        {[290, 316, 368].map((y) => <g key={y}><circle cx="684" cy={y} r="4" fill="#a2998d" strokeWidth="2" stroke="#33353d" /><circle cx="818" cy={y} r="4" fill="#a2998d" strokeWidth="2" stroke="#33353d" /></g>)}
        <Speed x={690} y={256} w={118} h={146} />
        <rect x="895" y="338" width="94" height="18" fill="#4d5059" stroke="#393b43" />
        {[904, 928, 955, 980].map((x) => <circle key={x} cx={x} cy="346" r="4" fill="#9a948b" stroke="#33353d" strokeWidth="2" />)}
        <Speed x={868} y={354} w={148} h={120} />
        <g transform="rotate(29 925 250)"><rect x="835" y="225" width="180" height="48" fill="#5b5e68" stroke="#3a3c45" /><path d="M842 238H1008M890 225V262M945 225V262M842 264H1008" stroke="#34363e" /></g>
        <circle cx="910" cy="317" r="21" fill="#a9a9ae" stroke="#5b5c63" /><circle cx="994" cy="317" r="6" fill="#a9a9ae" stroke="#444" />
        <circle cx="628" cy="317" r="6" fill="#8d93a4" stroke="#444" /><circle cx="400" cy="391" r="7" fill="#a9a9ae" stroke="#444" />
        <path d="M592 391L656 352V391Z" fill="#babdc9" stroke="#4a4d57" /><path d="M624 372v18" stroke="#444" />
        <rect x="592" y="412" width="64" height="60" fill="#999a9e" stroke="#4a4d57" /><path d="M592 412h64v29h-64z" fill="#878b9b" stroke="#4a4d57" /><path d="M624 412v29" stroke="#333" />
        <path d="M532 455V410Q540 385 560 385Q583 388 587 410V455Z" fill="#b0a077" stroke={K} />
        <path d="M412 463H515" stroke="#33353d" />
      </g>
      <Screws y={463} fill="#1b1b1b" />
      <path d="M588 93H690L1016 283" fill="none" stroke="#20242c" />
      {/* lower plate */}
      <path d="M366 479H1030L1036 485V724L1030 730H868V680L860 668H644L636 680V730H366L360 724V485Z" fill="url(#woodPink)" />
      {rng(24).map((i) => <path key={i} d={`M${374 + i * 28 + (i % 3) * 5} 483v${i % 2 ? 40 : 46}`} stroke="#e0bf92" strokeWidth="3" opacity=".5" />)}
      <path d="M362 477H1034" strokeWidth="5" stroke="#000" />
      <Screws y={489} />
      {rng(16).map((i) => <rect key={i} x={367 + i * 42.600} y="508" width="22" height="12" fill="#a49775" />)}
      <g clipPath="url(#lw)">
        <rect x="380" y="528" width="234" height="66" fill="#a2998d" stroke="none" /><rect x="380" y="593" width="234" height="120" fill="#cdb697" stroke="none" />
        {rng(7).map((i) => <path key={i} d={`M382 ${603 + i * 15}H612`} stroke="#d9bb90" strokeWidth="3" opacity=".7" />)}
        <Gearbox x={478} y={560} /><path d="M550 528h18v14l-4 16h-10l-4-16z" fill="#4a4b54" stroke="#33343c" />
        <path d="M380 592H614" /><g clipPath="url(#cutL)"><Wheel cx={445} cy={690} /></g>
        <path d="M380 617L545 709" stroke="#15161a" />
      </g>
      <path d="M380 529H594L613 545V698L600 709H545L380 617Z" fill="none" stroke="#15161a" />
      <g clipPath="url(#rw)">
        <rect x="890" y="528" width="126" height="66" fill="#a2998d" stroke="none" /><rect x="890" y="593" width="126" height="95" fill="#cdb697" stroke="none" />
        <Gearbox x={916} y={560} /><circle cx="1009" cy="550" r="6" fill="#999" /><path d="M890 592H1016" /><Wheel cx={954} cy={690} />
      </g>
      <path d="M890 529H1016V615L890 687Z" fill="none" stroke="#15161a" />
      <path d="M380 688L417 709H380ZM1015 688L980 709H1015Z" fill="#44604f" />
      <path d="M684 571H818L835 585V650L820 667H680L665 652V585Z" fill="#a2998d" stroke="#15161a" />
      <path d="M645 542H657V550H677V561H657V563H645ZM856 542H846V550H828V561H846V563H856Z" fill="#e3c896" />
      {[697, 739, 781].map((x) => <rect key={x} x={x} y="550" width="22" height="11" fill="#e3c896" />)}
      {[584, 626].map((y) => <g key={y}><rect x="645" y={y} width="11" height="20" fill="#e3c896" /><rect x="847" y={y} width="10" height="20" fill="#e3c896" /></g>)}
      <path d="M656 668H848V688H656Z" fill="#e3c896" />
      {rng(5).map((i) => <rect key={i} x={674 + i * 38} y="679" width="20" height="8" fill="#f0dcae" />)}
      <circle cx="442" cy="688" r="6" fill="#667" /><circle cx="952" cy="688" r="6" fill="#667" />
      <circle cx="374" cy="655" r="3" fill="#ddd" /><circle cx="1021" cy="655" r="3" fill="#ddd" /><circle cx="618" cy="716" r="3" fill="#333" /><circle cx="883" cy="716" r="3" fill="#ddd" />
      {/* finger joints */}
      {rng(8).map((i) => <rect key={i} x={359 + i * 42.400} y="53" width="20" height="9" fill="#f0dcae" />)}
      {rng(16).map((i) => <rect key={i} x="339" y={74 + i * 42.500} width="8" height="21" fill="#f0dcae" />)}
      {rng(11).map((i) => <rect key={i} x="1048" y={287 + i * 42.500} width="9" height="21" fill="#f0dcae" />)}
      <rect x="645" y="710" width="11" height="21" fill="#f0dcae" /><rect x="848" y="710" width="11" height="21" fill="#f0dcae" />
      {rng(9).map((i) => <rect key={i} x="0" y="0" width="22" height="10" fill="#b7a782" transform={`translate(${701 + i * 41.500} ${56 + i * 23.900}) rotate(30)`} />)}
      {[[905, 190], [976, 232]].map(([x, y]) => (
        <g key={x} transform={`rotate(30 ${x} ${y})`}><ellipse cx={x} cy={y} rx="26" ry="10" fill="#1c1d20" /><path d={`M${x - 24} ${y - 4}H${x + 24}`} stroke="#777" strokeDasharray="6 7" /></g>
      ))}
    </g>
  );
}

function Model() {
  return (
    <svg className="absolute top-[44px] left-[620px]" width="380" height="940" viewBox="620 150 380 940" shapeRendering="crispEdges">
      <defs>
        <linearGradient id="tubeR" gradientUnits="userSpaceOnUse" x1="797" y1="360" x2="840" y2="356">
          <stop offset="0" stopColor="#b9b9b9" /><stop offset=".05" stopColor="#d3d3d3" /><stop offset=".2" stopColor="#ebebeb" /><stop offset=".42" stopColor="#fcfcfc" /><stop offset=".66" stopColor="#fafafa" /><stop offset=".86" stopColor="#e2e2e2" /><stop offset=".96" stopColor="#cdcdcd" /><stop offset="1" stopColor="#b9b9b9" />
        </linearGradient>
        <linearGradient id="tubeL"><stop offset="0" stopColor="#c8c8c6" /><stop offset=".1" stopColor="#e4e4e3" /><stop offset=".35" stopColor="#fbfbfb" /><stop offset="1" stopColor="#f2f2f2" /></linearGradient>
        <linearGradient id="tubeW"><stop offset="0" stopColor="#fbfbfb" /><stop offset="1" stopColor="#dcdcdc" /></linearGradient>
        <linearGradient id="dark" x1="0" y1="0" x2="0" y2="1"><stop offset="0" stopColor="#333333" /><stop offset="1" stopColor="#1d1d1d" /></linearGradient>
        <linearGradient id="postX"><stop offset="0" stopColor="#8a8c89" /><stop offset=".1" stopColor="#a3a5a1" /><stop offset=".5" stopColor="#a8a9a6" /><stop offset=".9" stopColor="#9fa09d" /><stop offset="1" stopColor="#8f908d" /></linearGradient>
        <linearGradient id="postY" x1="0" y1="0" x2="0" y2="1"><stop offset="0" stopColor="#fff" stopOpacity=".38" /><stop offset=".45" stopColor="#fff" stopOpacity=".28" /><stop offset=".85" stopColor="#fff" stopOpacity="0" /></linearGradient>
        <linearGradient id="wood"><stop offset="0" stopColor="#e2c491" /><stop offset=".3" stopColor="#ecd4a6" /><stop offset=".55" stopColor="#e4c896" /><stop offset=".8" stopColor="#ecd3a3" /><stop offset="1" stopColor="#dfc18d" /></linearGradient>
        <linearGradient id="woodPink"><stop offset="0" stopColor="#d8be9b" /><stop offset=".5" stopColor="#d1baa0" /><stop offset="1" stopColor="#dac19c" /></linearGradient>
        <clipPath id="win"><path d="M380 95H690L1016 283V475H380Z" /></clipPath>
        <clipPath id="lw"><path d="M380 529H594L613 545V698L600 709H545L380 617Z" /></clipPath>
        <clipPath id="cutL"><path d="M380 600H540V709L380 617Z" /></clipPath>
        <clipPath id="rw"><path d="M890 529H1016V615L890 687Z" /></clipPath>
      </defs>
      <path d="M784 216L826 214 887 862 843 840Z" fill="url(#tubeR)" />
      <rect x="668" y="576" width="58" height="475" fill="url(#postX)" />
      <rect x="668" y="576" width="58" height="475" fill="url(#postY)" />
      <path d="M668 576.500H726" stroke="#111" />
      <Head />
      <Arm />
      <Base />
    </svg>
  );
}

/* ---------- viewport ---------- */

const V: Record<string, React.ReactNode> = {
  fit: <><path d="M10.500 10.500l4.500 4.500" stroke="#5b8fc6" strokeWidth="2.600" /><circle cx="6.500" cy="6.500" r="5.700" fill="#dcdedf" stroke="#6f7277" /><path d="M6.500 2.300L8 4.500H5zM6.500 10.700L5 8.500h3zM2.300 6.500L4.500 5v3zM10.700 6.500L8.500 8V5z" fill="#444" /></>,
  area: <><path d="M10.500 10.500l4.500 4.500" stroke="#5b8fc6" strokeWidth="2.600" /><circle cx="7" cy="7" r="5" fill="#d9dbdc" stroke="#8a8d92" /><rect x=".7" y=".7" width="10" height="9" fill="none" stroke="#777" strokeDasharray="2 1.200" /><path d="M5.500 4.500v4M8 6.500v3" stroke="#777" /></>,
  prev: <><path d="M.5 2.500L4 1l8 9 3 3-2.500 2.500L9 13z" fill="#8dbdea" stroke="#3f6fa5" strokeWidth=".9" /><path d="M4 7l4-3M7 11l4-3" stroke="#2d5c94" /><path d="M16 3.500h-4" stroke="#2b6fc4" strokeWidth="1.600" /><path d="M12.500.8L9 3.500l3.500 2.700z" fill="#2b6fc4" /></>,
  section: <><path d="M1 3l5-2.500h6L15 3v11l-4 1.500V6H6v9.500L1 14z" fill="#e8c440" stroke="#6d5a12" strokeWidth=".8" /><path d="M1 3l5-2.500h6L15 3l-3 1.500V13H10V6H7L5 4.500z" fill="#4b88d4" stroke="#234e8c" strokeWidth=".8" /><path d="M6.500 6v9M11 6v8" stroke="#6b9fdc" strokeWidth="1.600" /></>,
  orient: <><path d="M.7 5.500L5.500.7h9.800v9.500L11 15.300z" fill="#f1f1f1" stroke="#6a6c70" strokeWidth=".9" /><path d="M5.500.7v5M11 5.500L15.300.7" stroke="#6a6c70" /><rect x=".7" y="5.500" width="10" height="9.800" fill="#a9cdf2" stroke="#355f92" /><path d="M9 1v4M7 3h4M13 6v4" stroke="#d22" /></>,
  style: <><path d="M1 4.500L5 1h10v10.500L11 15.300H1z" fill="#b6d4f4" stroke="#365f92" strokeWidth=".9" /><path d="M11 4.500V15.300L15 11.500V1z" fill="#4d7fc2" stroke="#365f92" strokeWidth=".9" /><path d="M1 4.500h10M5 1L1.500 4" stroke="#365f92" /><rect x="1.500" y="5" width="9" height="10" fill="#dcebfa" /></>,
  glasses: <><circle cx="4" cy="11" r="3" fill="#e6edf3" stroke="#63666b" strokeWidth="1.200" /><circle cx="11" cy="12" r="3" fill="#e6edf3" stroke="#63666b" strokeWidth="1.200" /><path d="M1 10Q1 4 4 3.500M13.500 11Q16 5 13 4M7 11h1.200" stroke="#63666b" fill="none" strokeWidth="1.200" /></>,
  ball: <><path d="M8 8V.5A7.500 7.500 0 01.5 8z" fill="#3f7fd8" /><path d="M8 8H.5A7.500 7.500 0 018 .5z" fill="#4a86dc" /><path d="M8 8V.5A7.500 7.500 0 0115.500 8z" fill="#e14b42" /><path d="M8 8h7.500A7.500 7.500 0 018 15.500z" fill="#f0cf3c" /><path d="M8 8v7.500A7.500 7.500 0 01.5 8z" fill="#3aae48" /><ellipse cx="6.500" cy="4" rx="3.500" ry="2" fill="#fff" opacity=".35" /></>,
  scene: <><path d="M1 11h14v4.500H1z" fill="#fff" /><path d="M1 12h14M2.500 15h14" stroke="#333" strokeWidth="2" strokeDasharray="2 2" /><path d="M8 6.500V.5A6 6 0 002 6.500z" fill="#3f7fd8" /><path d="M8 6.500V.5A6 6 0 0114 6.500z" fill="#e14b42" /><path d="M8 6.500H14A6 6 0 018 12.500z" fill="#f0cf3c" /><path d="M8 6.500V12.500A6 6 0 012 6.500z" fill="#3aae48" /></>,
  settings: <><rect x=".7" y="2" width="13.600" height="10" fill="#d9dbde" stroke="#5e6064" strokeWidth="1.200" /><rect x="2.500" y="4" width="10" height="6" fill="#b4b7bb" stroke="#77797d" strokeWidth=".6" /><path d="M7.500 12v2.500M4 15.300h8" stroke="#5e6064" strokeWidth="1.400" /><path d="M4 7l4-5.500h7.500V6L11 7l-2 2z" fill="#ecc08b" stroke="#8a5a22" strokeWidth=".7" /></>,
};
const viewTools: (string | 0)[] = ["fit", "area", "prev", "section", "orient", 0, "style", 0, "glasses", 0, "ball", "scene", 0, "settings", 0];

const tabs: [string, string][] = [["Assembly", "w-[68px]"], ["Layout", "w-14"], ["Sketch", "w-[56px] pr-[3px]"], ["Evaluate", "w-[62px] pr-px"], ["Office Products", "w-[97px]"]];

function Viewport() {
  return (
    <div className="relative h-[1035px] border-r border-[#39475e] bg-white">
      <Backdrop />
      <Model />
      <div className="relative -mt-px flex items-start text-[11px] leading-[15px] text-[#111113]">
        {tabs.map(([t, w]) =>
          t === "Evaluate" ? (
            <div key={t} className={`h-[22px] border-r border-b border-l border-black bg-[#d8dbe0] pt-px text-center font-bold tracking-[-0.25px] ${w}`}>{t}</div>
          ) : (
            <div key={t} className={`h-[20px] border-t border-r border-b border-black bg-[#acaeb2] text-center shadow-[inset_1px_0_0_#c9cbcf] ${t === "Sketch" ? "border-r-0" : ""} ${w}`}>{t}</div>
          )
        )}
        <div className="ml-[313px] flex h-[28px] items-center">
          {viewTools.map((v, i) =>
            v === 0 ? (
              <div key={i} className="flex w-[14px] justify-start pl-px opacity-70"><Caret /></div>
            ) : (
              <div key={i} className="flex w-[23px] justify-start"><Ico>{V[v]}</Ico></div>
            )
          )}
        </div>
        <div className="mr-[11px] ml-auto flex h-[28px] items-center gap-[9.500px] opacity-90">
          {[0, 1].map((i) => (
            <svg key={i} width="14" height="14" viewBox="0 0 14 14">
              <rect x=".5" y=".5" width="12.500" height="12.500" fill="#f6f5f0" stroke="#75767a" />
              <g transform={i ? "translate(13.500 0) scale(-1 1)" : ""}><path d="M5.500 3.500H3.500V5.500M3.500 8V10H5.500" stroke="#75767a" fill="none" strokeWidth="1.300" /><rect x="7.500" y="3.500" width="2.500" height="6.500" fill="#fff" stroke="#75767a" /></g>
            </svg>
          ))}
          <WinButtons dim />
        </div>
      </div>
      <div className="absolute top-[499px] left-0 flex h-[39px] w-[7px] flex-col items-center justify-center gap-[5px] border border-l-0 border-black bg-[#dfe2ea]">
        {rng(3).map((i) => <svg key={i} width="4" height="5" viewBox="0 0 4 5"><path d="M.5 0v5L3.500 2.500z" fill="#222" /></svg>)}
      </div>
      <svg className="absolute top-[933px] left-[24px]" width="60" height="60" viewBox="24 1040 60 60">
        <circle cx="37.500" cy="1085" r="4" fill="#fff" /><path d="M35 1081l5 8M40 1081l-5 8" stroke="#e22" strokeDasharray="2 1" />
        <path d="M38 1085V1062" stroke="#1d5f22" strokeWidth="4.500" /><path d="M38 1084V1062" stroke="#6fb873" strokeWidth="2" /><path d="M34 1064L38 1054.500 42 1064Z" fill="#14651b" />
        <path d="M39 1085.300H60" stroke="#1a1f9c" strokeWidth="4.500" /><path d="M39 1085.300H60" stroke="#7e83ee" strokeWidth="2" /><path d="M59 1081L68 1085.300 59 1089.500Z" fill="#1412b8" />
        <path d="M34.500 1044l3 4.500 3-4.500M37.500 1048v5" stroke="#0c9a10" fill="none" />
        <path d="M68 1081H72.500L68.500 1089H73" stroke="#1010f0" fill="none" />
      </svg>
      <div className="absolute -bottom-px left-[14px] text-[11.500px] leading-[16px] font-bold tracking-[-0.1px] text-[#111]">*Left</div>
    </div>
  );
}

/* ---------- bottom bars ---------- */

function StatusBar() {
  return (
    <div className="flex h-[20px] items-center border-t border-b border-black bg-[#d8dbe0] pt-px pl-[2px] text-[12px] tracking-[-0.27px] whitespace-nowrap text-[#050505] shadow-[inset_0_1px_0_#eceef1]">
      <div>SolidWorks Student Edition - Academic Use Only</div>
      <div className="ml-auto w-[86px]">Under Defined</div>
      <div className="w-[127px]">Large Assembly Mode</div>
      <div className="w-[153px]">Editing Assembly</div>
      <div className="w-[45px]">IPS</div>
      <div className="w-[85px]"><Caret up /></div>
      <Ico s={17}><path d="M1 10.500L10.500 1.500l4.500.5.500 4.500L6 15z" fill="#ffc918" stroke="#8b5b04" strokeWidth="1.300" strokeLinejoin="round" /><path d="M4 10l5-4.500M6 12l5-4.500M5 11l5-4.500" stroke="#fff3a8" /><circle cx="12.500" cy="4" r="1.200" fill="#fff" stroke="#8b5b04" strokeWidth=".7" /></Ico>
      <div className="w-[6px]" />
    </div>
  );
}

function TaskButton({ children, kind }: Kids & { kind: "plain" | "open" | "active" }) {
  const look = kind === "active"
    ? "border border-[#dcdcdc] bg-gradient-to-br from-[#b9b9b9] via-[#8f8f8f] to-[#a4a4a4]"
    : kind === "open" ? "border border-[#8a8a8a] bg-gradient-to-br from-[#606060] via-[#3c3c3c] to-[#505050]" : "";
  return <div className={`flex h-[38px] w-[58px] shrink-0 items-center justify-center rounded-[3px] ${look}`}>{children}</div>;
}

const smoke: [number, number, number, number, string][] = [
  [0, 0, 560, 39, "#202224"], [560, -6, 260, 34, "#2b2d2f"], [820, 6, 200, 36, "#272829"], [1155, 0, 70, 26, "#4a4b4b"],
  [1230, 14, 110, 30, "#353534"], [1290, -4, 130, 30, "#4d4b48"], [1330, 12, 150, 30, "#504d49"], [1440, 4, 90, 30, "#3b3a3a"], [1490, 18, 90, 24, "#484644"], [1060, 0, 55, 40, "#2e2f31"],
];

function Taskbar() {
  return (
    <div className="relative flex h-[39px] items-center overflow-hidden border-t border-[#6a6b6c] bg-[#18191b]">
      {smoke.map(([x, y, w, h, c], i) => (
        <div key={i} className="absolute rounded-full blur-[9px]" style={{ left: x, top: y, width: w, height: h, background: c }} />
      ))}
      <div className="relative flex w-full items-center">
        <svg width="38" height="38" viewBox="0 0 38 38" className="ml-2">
          <defs><radialGradient id="orb" cx=".5" cy=".9" r=".9"><stop offset="0" stopColor="#3fd0f4" /><stop offset=".45" stopColor="#1f5f9a" /><stop offset="1" stopColor="#8fa6bd" /></radialGradient></defs>
          <circle cx="19" cy="19" r="18" fill="url(#orb)" stroke="#8ea3b3" />
          <path d="M12 11q4-2.500 8-.5l-1.500 7q-4-2-8 .5z" fill="#ee5a26" /><path d="M21.500 11q4 1.700 8-.5L28 17.500q-4 2-8 .5z" fill="#8fc63c" />
          <path d="M10 19.500q4-2.500 8-.5l-1.500 7q-4-2-8 .5z" fill="#3da0e6" /><path d="M19.500 19.500q4 1.700 8-.5L26 26q-4 2-8 .5z" fill="#fcc52b" />
          <path d="M3 15Q19 6 35 15Q31 2 19 2T3 15" fill="#fff" opacity=".25" />
        </svg>
        <div className="ml-[14px]"><TaskButton kind="plain">
          <svg width="34" height="32" viewBox="0 0 34 32"><path d="M2 6V3h8l2 3h5V4h8v3h6v23H2z" fill="#e9c763" stroke="#b9923a" /><path d="M3 9h27v20H3z" fill="#fbe9a8" /><path d="M3 9h27v9H3z" fill="#f8de8c" /><path d="M4 3.500h5v2H4z" fill="#3db04a" /><path d="M13 6h4v2h-4z" fill="#d94432" /><path d="M21 7h7v2h-7z" fill="#5aa6e4" /><path d="M6 31V20q0-2 2-2h18q2 0 2 2v11h-5v-7H11v7z" fill="#8ecbea" stroke="#4a94c2" /></svg>
        </TaskButton></div>
        <TaskButton kind="plain"><div className="ml-[6px]">
          <svg width="32" height="32" viewBox="0 0 32 32"><path d="M25 4l4 2v20l-6 4z" fill="#b39055" /><path d="M11 3h15l-4 25L2 23z" fill="#6fb8c6" stroke="#d8eef2" /><path d="M22 28L26 3l2 23z" fill="#eef3f4" /><path d="M11 3h15l-.6 3.500H9.500z" fill="#c9d6d8" /><path d="M12 2v2M15 2v2M18 2v2M21 2v2M24 2v2" stroke="#666" /><path d="M5 22q12-2 17-13" stroke="#b7e2e8" fill="none" strokeWidth="3" opacity=".6" /></svg>
        </div></TaskButton>
        <div className="ml-[8px]"><TaskButton kind="open">
          <svg width="32" height="32" viewBox="0 0 32 32"><circle cx="16.500" cy="14.500" r="13" fill="#24569f" /><circle cx="14" cy="8.500" r="6" fill="#4fa3de" /><path d="M20 5q5 2 4 9l-6 2-3-4q2-5 5-7z" fill="#3d82cc" /><path d="M30 9Q33 20 25 27Q15 34 6 27Q-1 19 3 8L6 11Q9 8 13 10L15 12L10 15.500Q12 21 18 20.500Q23 20 25 14L28 8z" fill="#e8652a" /><path d="M28 7Q34 18 26 27Q20 31 14 30Q24 26 26 18Q27 11 24 4z" fill="#f9b52e" /></svg>
        </TaskButton></div>
        <div className="ml-[5px]"><TaskButton kind="plain">
          <svg width="30" height="32" viewBox="0 0 30 32"><path d="M1 2l16-1 6 4v24l-22 1z" fill="#82c341" /><path d="M23 5v24" stroke="#5a9a28" strokeWidth="2" /><text x="3.500" y="22" fontSize="18" fontFamily="Open Sans, sans-serif" fontWeight="700" fill="#fff" textLength="18" lengthAdjust="spacingAndGlyphs">Qt</text><path d="M16 31q-2-11 13-16 0 14-11 15z" fill="#e4e6e4" stroke="#999" strokeWidth=".6" /></svg>
        </TaskButton></div>
        <div className="ml-[3px]"><TaskButton kind="active">
          <svg width="32" height="32" viewBox="0 0 32 32"><path d="M1 7L16 1 31 6 16 12z" fill="#f24b41" /><path d="M1 7L16 12V31L1 24z" fill="#c5120f" /><path d="M16 12L31 6V23L16 31z" fill="#dd2019" /><text x="3.500" y="23.500" fontSize="14" fontFamily="Open Sans, sans-serif" fontWeight="800" fill="#fff" transform="skewY(7)">S</text><text x="17" y="30" fontSize="14" fontFamily="Open Sans, sans-serif" fontWeight="800" fill="#fff" textLength="13" lengthAdjust="spacingAndGlyphs" transform="skewY(-11)">W</text></svg>
        </TaskButton></div>
        <div className="ml-[4px]"><TaskButton kind="open">
          <svg width="32" height="30" viewBox="0 0 32 30"><path d="M1 9l6-3v16l-6-2z" fill="#cfd2d4" stroke="#777" /><path d="M9 1l22 3-1.500 18L7 19z" fill="#d4d7d8" stroke="#888" /><path d="M11 3.500l17.500 2.500-1 13.500L9.500 17z" fill="#0b2110" /><path d="M10.500 14l3-6 1 6 3-7 1.500 9 3-7 2 7 2-4M11 9h16" stroke="#35d23f" fill="none" strokeWidth="1.100" /><ellipse cx="19" cy="27" rx="8" ry="2.700" fill="#dfe1e2" /><path d="M17 21h4v5h-4z" fill="#b5b8ba" /></svg>
        </TaskButton></div>
        <div className="ml-auto flex items-center">
          <svg width="8" height="5" viewBox="0 0 8 5"><path d="M0 5h8L4 .5z" fill="#f4f4f4" /></svg>
          <div className="mr-[10px] ml-[13px] w-[54px] text-center text-[12px] leading-[17px] tracking-[-0.5px] whitespace-nowrap text-white">
            <div>9:31 PM</div>
            <div>1/10/2015</div>
          </div>
          <div className="h-[37px] w-[14px] border border-[#75787a] bg-gradient-to-br from-[#55585a] via-[#222324] to-[#1a1b1b]" />
        </div>
      </div>
    </div>
  );
}

export default function App() {
  return (
    <div className="flex h-[1200px] w-[1600px] flex-col overflow-hidden bg-[#d8dbe0] font-['Open_Sans','Noto_Sans',sans-serif]">
      <TitleBar />
      <Ribbon />
      <Viewport />
      <StatusBar />
      <Taskbar />
    </div>
  );
}
